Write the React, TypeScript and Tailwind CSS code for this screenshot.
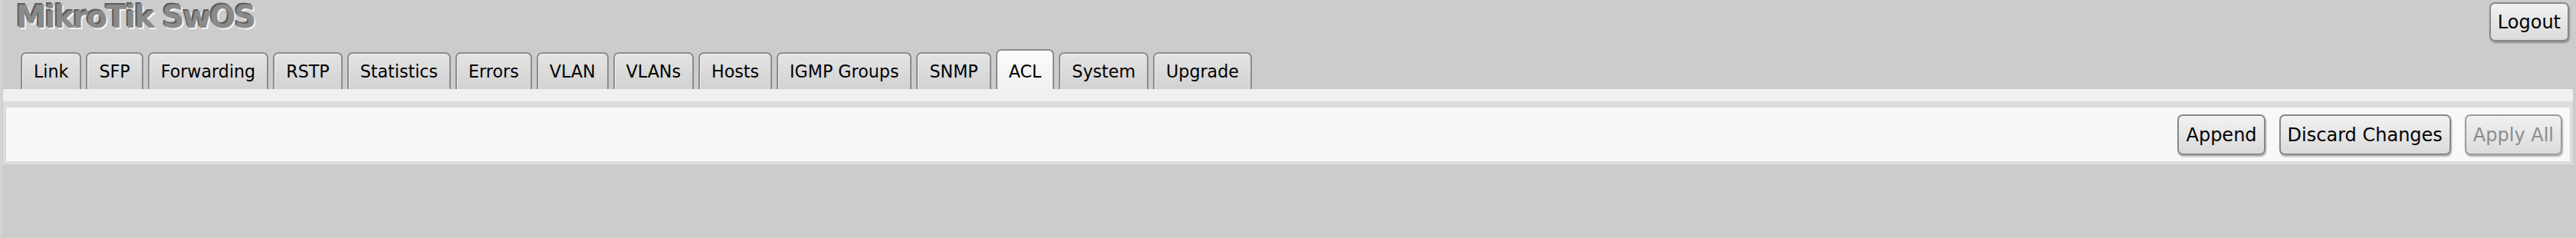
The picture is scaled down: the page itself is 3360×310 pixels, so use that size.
import React from "react";

const tabs = [
  "Link",
  "SFP",
  "Forwarding",
  "RSTP",
  "Statistics",
  "Errors",
  "VLAN",
  "VLANs",
  "Hosts",
  "IGMP Groups",
  "SNMP",
  "ACL",
  "System",
  "Upgrade",
];

function Btn({ children, disabled }: { children: React.ReactNode; disabled?: boolean }) {
  return (
    <button
      className={
        disabled
          ? "h-[53px] px-[9px] pt-[2px] rounded-[7px] border-2 border-[#9c9c9c] bg-gradient-to-b from-[#f0f0f0] to-[#dcdcdc] text-[24px] leading-none text-[#8c8c8c] shadow-[1px_2px_2px_rgba(0,0,0,0.3)]"
          : "h-[53px] px-[9px] pt-[2px] rounded-[7px] border-2 border-[#878787] bg-gradient-to-b from-[#f2f2f2] to-[#dadada] text-[24px] leading-none text-black shadow-[1px_2px_2px_rgba(0,0,0,0.3)]"
      }
    >
      {children}
    </button>
  );
}

export default function App() {
  return (
    <div
      className="min-h-[310px] bg-[#cccccc] border-l-[3px] border-[#d4d4d4]"
      style={{ fontFamily: '"DejaVu Sans", Verdana, sans-serif' }}
    >
      <div className="flex justify-between items-start h-[64px]">
        <div className="ml-[18px] mt-[2px] text-[40px] leading-none font-bold tracking-[-2px] text-[#8a8a8a] [text-shadow:-2px_-2px_0_#5c5c5c,2px_2px_0_#f2f2f2]">
          MikroTik SwOS
        </div>
        <div className="mt-[3px] mr-[9px]">
          <button className="h-[51px] px-[9px] rounded-[7px] border-2 border-[#878787] bg-gradient-to-b from-[#f2f2f2] to-[#dadada] text-[24px] leading-none text-black shadow-[1px_2px_2px_rgba(0,0,0,0.3)]">
            Logout
          </button>
        </div>
      </div>
      <div className="flex items-end gap-[6px] h-[52px] ml-[24px]">
        {tabs.map((t) =>
          t === "ACL" ? (
            <div
              key={t}
              className="h-[52px] pt-[4px] px-[15px] flex items-center border-2 border-b-0 border-[#8c8c8c] rounded-t-[7px] bg-gradient-to-b from-[#fbfbfb] to-[#f0f0f0] text-[22.2px] leading-none text-black"
            >
              {t}
            </div>
          ) : (
            <div
              key={t}
              className="h-[48px] px-[15px] flex items-center border-2 border-b-0 border-[#8c8c8c] rounded-t-[7px] bg-gradient-to-b from-[#e4e4e4] to-[#d2d2d2] shadow-[inset_1px_1px_0_#eeeeee] text-[22.2px] leading-none text-black"
            >
              {t}
            </div>
          )
        )}
      </div>
      <div className="ml-[1px] mr-[4px]">
        <div className="h-[16px] bg-[#f0f0f0]" />
        <div className="bg-[#dcdcdc] pt-[8px] px-[4px] pb-[4px]">
          <div className="h-[70px] bg-[#f8f8f8] flex justify-end items-center gap-[18px] pr-[10px]">
            <Btn>Append</Btn>
            <Btn>Discard Changes</Btn>
            <Btn disabled>Apply All</Btn>
          </div>
        </div>
      </div>
    </div>
  );
}
